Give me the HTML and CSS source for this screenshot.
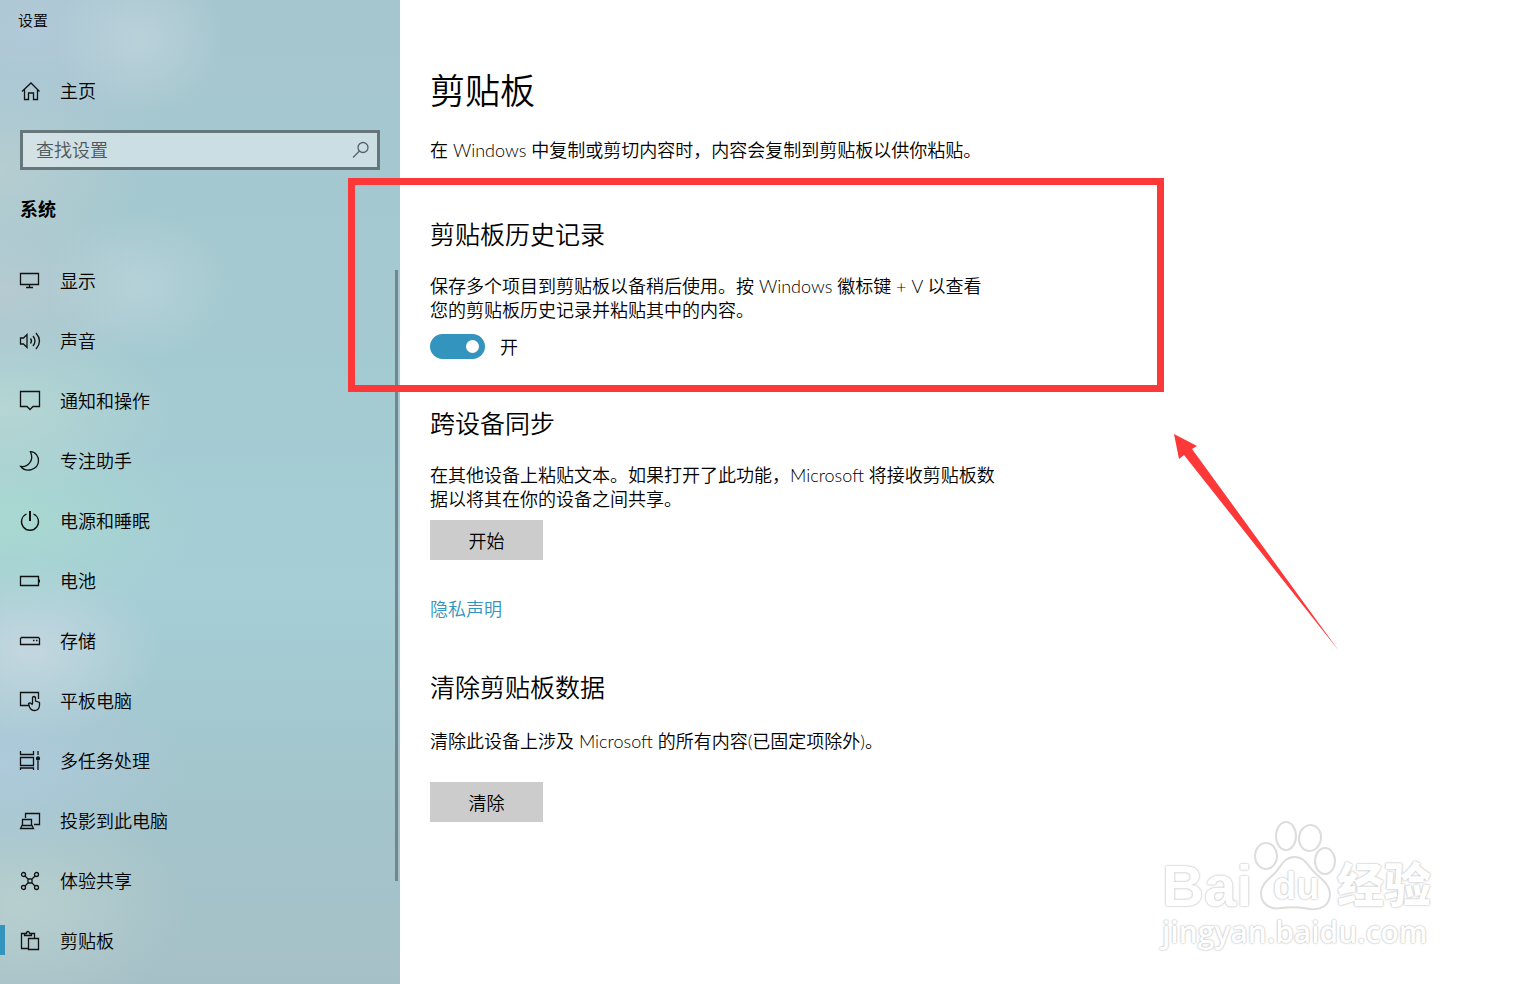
FILE: index.html
```html
<!DOCTYPE html>
<html lang="zh-CN">
<head>
    <meta charset="UTF-8">
    <meta name="viewport" content="width=device-width, initial-scale=1.0">
    <title>设置</title>
    <link rel="stylesheet" href="styles.css">
</head>
<body>
    <div class="window">
        <aside class="sidebar">
            <div class="app-title">设置</div>
            <a class="nav-item home" href="#">
                <svg class="icon" viewBox="0 0 20 20"><path d="M2 10.5 L11 2 L19.5 10.5 M4.5 8.5 V18.5 H8.5 V12 H13.5 V18.5 H17.5 V8.5"/></svg>
                <span>主页</span>
            </a>
            <div class="search">
                <input type="text" placeholder="查找设置" aria-label="查找设置">
                <svg class="search-icon" viewBox="0 0 20 20"><circle cx="13" cy="7.5" r="5"/><path d="M9.5 11 L3 17.5"/></svg>
            </div>
            <h2 class="group-title">系统</h2>
            <nav class="nav">
                <a class="nav-item" href="#">
                    <svg class="icon" viewBox="0 0 20 20"><path d="M.5 2.5 H18.5 V13.5 H.5 Z M9.5 13.5 V16 M6 16.5 H13"/></svg>
                    <span>显示</span>
                </a>
                <a class="nav-item" href="#">
                    <svg class="icon" viewBox="0 0 20 20"><path d="M.5 7 H3.5 L7 3.5 V16.5 L3.5 13 H.5 Z M10.5 7.5 Q12.5 10 10.5 12.5 M13 5 Q17 10 13 15 M16 2 Q23 10 16 18"/></svg>
                    <span>声音</span>
                </a>
                <a class="nav-item" href="#">
                    <svg class="icon" viewBox="0 0 20 20"><path d="M.5 .5 H19.5 V15.5 H13 L10 18.5 L7 15.5 H.5 Z"/></svg>
                    <span>通知和操作</span>
                </a>
                <a class="nav-item" href="#">
                    <svg class="icon" viewBox="0 0 20 20"><path d="M10.5 .7 C16 1 18.7 5.5 18.5 10 C18 19 6 22 .8 15.5 C7.5 16.5 14.5 10 10.5 .7 Z"/></svg>
                    <span>专注助手</span>
                </a>
                <a class="nav-item" href="#">
                    <svg class="icon" viewBox="0 0 20 20"><path d="M6.5 3 A8.5 8.5 0 1 0 13.5 3"/><path class="thick" d="M10 0 V10"/></svg>
                    <span>电源和睡眠</span>
                </a>
                <a class="nav-item" href="#">
                    <svg class="icon" viewBox="0 0 20 20"><path d="M.5 5.5 H18.5 V14.5 H.5 Z"/><path class="thick" d="M19 8.5 V11.5"/></svg>
                    <span>电池</span>
                </a>
                <a class="nav-item" href="#">
                    <svg class="icon" viewBox="0 0 20 20"><path d="M1.5 6.5 H18.5 L19.5 7.5 V13.5 H.5 V7.5 Z M13 9.5 H14.5 M16 9.5 H17.5"/></svg>
                    <span>存储</span>
                </a>
                <a class="nav-item" href="#">
                    <svg class="icon" viewBox="0 0 20 20"><path d="M8.5 14.5 H.5 V1.5 H18.5 V8 M12.5 13 V6.5 Q14 4.5 15.5 6.5 V10 L19.5 11.5 V14.5 Q19 19.5 14.5 19.5 Q11 19.5 9.5 16 L8.5 12.5 Q10.5 11 12.5 14"/></svg>
                    <span>平板电脑</span>
                </a>
                <a class="nav-item" href="#">
                    <svg class="icon" viewBox="0 0 20 20"><path d="M.5 0 V3.5 H13.5 V0 M.5 6.5 H13.5 V14.5 H.5 Z M.5 19 V17 H13.5 V19 M18 0 V4 M18 10 V19"/><circle class="solid" cx="18" cy="7.5" r="1.5"/></svg>
                    <span>多任务处理</span>
                </a>
                <a class="nav-item" href="#">
                    <svg class="icon" viewBox="0 0 20 20"><path d="M5.5 7 V2.5 H19.5 V13.5 H14 M2.5 14 V8.5 H11.5 V14 M2 14.5 H12 L13.5 17.5 H.5 Z"/></svg>
                    <span>投影到此电脑</span>
                </a>
                <a class="nav-item" href="#">
                    <svg class="icon" viewBox="0 0 20 20"><circle cx="3.5" cy="3.5" r="2"/><circle cx="16.5" cy="3.5" r="2"/><circle cx="3.5" cy="16.5" r="2"/><circle cx="16.5" cy="16.5" r="2"/><path d="M8 8 H12 V12 H8 Z M5 5 L8 8 M15 5 L12 8 M5 15 L8 12 M15 15 L12 12"/></svg>
                    <span>体验共享</span>
                </a>
                <a class="nav-item active" href="#">
                    <svg class="icon" viewBox="0 0 20 20"><path d="M8 17.5 H1.5 V2.5 H4.5 M12 2.5 H14.5 V7 M4.5 4.5 V2.5 H6.5 Q6.5 .5 8 .5 Q9.5 .5 9.5 2.5 H11.5 V4.5 Z M8.5 7.5 H18.5 V18.5 H8.5 Z"/></svg>
                    <span>剪贴板</span>
                </a>
            </nav>
            <div class="scrollbar"></div>
        </aside>

        <main class="content">
            <h1>剪贴板</h1>
            <p>在 Windows 中复制或剪切内容时，内容会复制到剪贴板以供你粘贴。</p>

            <section class="history">
                <h2>剪贴板历史记录</h2>
                <p>保存多个项目到剪贴板以备稍后使用。按 Windows 徽标键 + V 以查看<br>您的剪贴板历史记录并粘贴其中的内容。</p>
                <label class="toggle">
                    <input type="checkbox" checked>
                    <span>开</span>
                </label>
            </section>

            <section class="sync">
                <h2>跨设备同步</h2>
                <p>在其他设备上粘贴文本。如果打开了此功能，Microsoft 将接收剪贴板数<br>据以将其在你的设备之间共享。</p>
                <button type="button">开始</button>
                <a class="privacy" href="#">隐私声明</a>
            </section>

            <section class="clear">
                <h2>清除剪贴板数据</h2>
                <p>清除此设备上涉及 Microsoft 的所有内容(已固定项除外)。</p>
                <button type="button">清除</button>
            </section>
        </main>

        <!-- marks over the window -->
        <div class="mark-box"></div>
        <svg class="mark-arrow" viewBox="0 0 166 218"><path d="M0 0 L23 12 L18 15 L165 217 L10 21 L5 25 Z"/></svg>

        <div class="watermark">
            <div class="brand">
                <span class="brand-bai">Bai</span>
                <span class="paw">
                    <svg viewBox="0 0 84 90">
                        <ellipse cx="13" cy="36" rx="11" ry="13"/>
                        <ellipse cx="33" cy="16" rx="10" ry="14"/>
                        <ellipse cx="57" cy="18" rx="11" ry="13" transform="rotate(10 57 18)"/>
                        <ellipse cx="72" cy="41" rx="10" ry="13"/>
                        <path d="M42 37 C52 37 55 46 62 53 C70 60 77 65 77 75 C76 87 66 90 57 89 C47 87 37 87 28 88 C17 90 8 84 8 73 C8 64 16 59 22 53 C29 45 31 37 42 37 Z"/>
                    </svg>
                    <span class="brand-du">du</span>
                </span>
                <span class="brand-cn">经验</span>
            </div>
            <div class="site">jingyan.baidu.com</div>
        </div>
    </div>
</body>
</html>
```
FILE: styles.css
```css
* {
    box-sizing: border-box;
}
body {
    margin: 0;
    font-family: Lato, "Noto Sans CJK SC", sans-serif;
    font-size: 18px;
    font-weight: 350;
    line-height: 24px;
    color: #000;
    background: #fff;
}
h1, h2, p {
    margin: 0;
    font-weight: inherit;
}
a {
    color: inherit;
    text-decoration: none;
}
.window {
    position: relative;
    display: grid;
    grid-template-columns: 400px 1fr;
    min-height: 100vh;
    overflow: hidden;
}

/* Sidebar */
.sidebar {
    position: relative;
    background:
        radial-gradient(85px 75px at 140px 40px, rgba(192, 213, 220, 0.7), rgba(192, 213, 220, 0.3) 55%, transparent),
        radial-gradient(95px 75px at 140px 285px, rgba(188, 213, 220, 0.7), rgba(188, 213, 220, 0.3) 55%, transparent),
        radial-gradient(190px 120px at 30px 30px, #b1c9d8, transparent),
        radial-gradient(140px 100px at 0 170px, #b6cdd1, transparent),
        radial-gradient(170px 90px at 0 290px, #b6cad1, transparent),
        radial-gradient(180px 90px at 0 410px, #b5d6d3, transparent),
        radial-gradient(200px 100px at 0 520px, #a9d9d1, transparent),
        radial-gradient(130px 90px at 30px 650px, #c4d7e0, transparent),
        radial-gradient(190px 100px at 0 765px, #aecadb, transparent),
        radial-gradient(170px 110px at 20px 905px, #b8cfcf, transparent),
        linear-gradient(#a6c6cf, #a4c9d0 30%, #a5ced6 60%, #a3c5cc 80%, #a6c0c7);
}
.app-title {
    padding: 8px 18px 0;
    font-size: 15px;
}
.nav-item {
    position: relative;
    display: flex;
    align-items: center;
    gap: 20px;
    height: 60px;
    padding-left: 20px;
}
.home {
    margin-top: 29px;
}
.icon, .search-icon {
    width: 20px;
    height: 20px;
    fill: none;
    stroke: #111;
    stroke-width: 1.3;
    overflow: visible;
}
.icon .thick {
    stroke-width: 2;
}
.icon .solid {
    fill: #111;
}
.search {
    display: flex;
    align-items: center;
    height: 40px;
    margin: 9px 20px 0;
    padding: 0 7px 0 13px;
    border: 3px solid #66777c;
    background: rgba(255, 255, 255, 0.42);
}
.search input {
    flex: 1;
    min-width: 0;
    padding: 0;
    border: 0;
    outline: 0;
    background: none;
    font: inherit;
}
.search input::placeholder {
    color: #4c585c;
    opacity: 1;
}
.search-icon {
    stroke: #55636a;
}
.group-title {
    margin: 27px 20px 30px;
    font-size: 18px;
    font-weight: 700;
}
.active::before {
    content: "";
    position: absolute;
    left: 0;
    top: 14px;
    width: 5px;
    height: 30px;
    background: #3394bd;
}
.scrollbar {
    position: absolute;
    top: 270px;
    right: 2px;
    width: 3px;
    height: 611px;
    background: #74868b;
}

/* Content */
.content {
    padding: 66px 30px 30px;
}
.content h1 {
    margin-bottom: 24px;
    font-size: 35px;
    line-height: 48px;
}
.content h2 {
    margin-bottom: 22px;
    font-size: 25px;
    line-height: 36px;
}
.history {
    margin-top: 54px;
}
.toggle {
    display: flex;
    align-items: center;
    gap: 15px;
    margin-top: 12px;
}
.toggle input {
    display: flex;
    align-items: center;
    justify-content: flex-end;
    width: 55px;
    height: 25px;
    margin: 0;
    padding-right: 6px;
    border-radius: 13px;
    appearance: none;
    background: #3394bd;
}
.toggle input::after {
    content: "";
    width: 13px;
    height: 13px;
    border-radius: 50%;
    background: #fff;
}
.sync {
    margin-top: 46px;
}
.content button {
    display: block;
    width: 113px;
    height: 40px;
    margin-top: 9px;
    padding: 2px 0 0;
    border: 0;
    background: #ccc;
    color: #000;
    font: inherit;
}
.privacy {
    display: inline-block;
    margin-top: 37px;
    color: #3394bd;
}
.clear {
    margin-top: 48px;
}
.content .clear h2 {
    margin-bottom: 24px;
}
.content .clear button {
    margin-top: 29px;
}

/* Marks */
.mark-box {
    position: absolute;
    left: 348px;
    top: 178px;
    width: 816px;
    height: 214px;
    border: 7px solid #fd3838;
}
.mark-arrow {
    position: absolute;
    left: 1174px;
    top: 434px;
    width: 166px;
    height: 218px;
    fill: #fd3838;
}

/* Watermark */
.watermark {
    position: absolute;
    right: 80px;
    bottom: 32px;
    width: 273px;
    color: #fff;
    text-shadow: 0 0 2px #bbb, 0 0 2px #ccc;
}
.brand {
    display: flex;
    align-items: flex-end;
    height: 92px;
}
.brand-bai {
    width: 91px;
    font-family: "Liberation Sans", sans-serif;
    font-size: 58px;
    font-weight: 700;
    line-height: 52px;
}
.paw {
    position: relative;
    width: 84px;
    height: 92px;
}
.paw svg {
    width: 84px;
    height: 90px;
    overflow: visible;
    fill: #fff;
    stroke: #ddd;
    stroke-width: 2;
}
.brand-du {
    position: absolute;
    left: 20px;
    bottom: 6px;
    font-family: "Liberation Sans", sans-serif;
    font-size: 38px;
    font-weight: 700;
    line-height: 40px;
}
.brand-cn {
    font-family: "Noto Sans CJK SC", sans-serif;
    font-size: 47px;
    font-weight: 900;
    line-height: 60px;
}
.site {
    font-family: "Open Sans", sans-serif;
    font-size: 30px;
    font-weight: 600;
    line-height: 40px;
}
```
